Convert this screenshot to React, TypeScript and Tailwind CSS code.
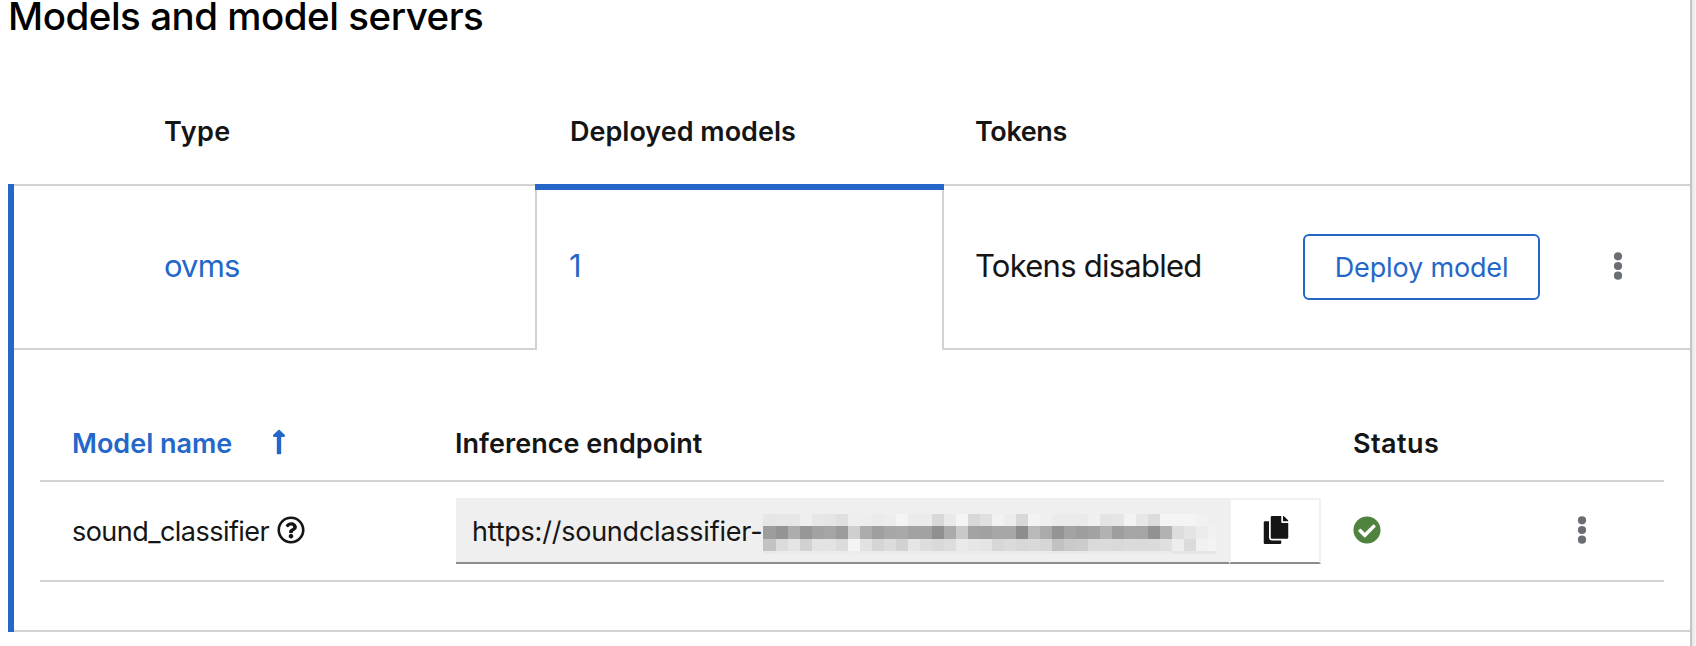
import {
  FaCheckCircle,
  FaCopy,
  FaLongArrowAltUp,
  FaRegQuestionCircle,
} from "react-icons/fa";

// Tones of the redacted part of the endpoint, one list per band of cells.
const REDACTED_ROWS: string[] = [
  "e6 e7 e7 ef e7 e5 e0 ee ed eb ed f4 eb eb d8 e9 f4 d8 e0 f1 ec d8 f3 ef eb eb ea f0 e4 e5 f3 e7 dc f4 f4 f4 f1 ef",
  "9d 94 ad 97 a2 a5 9b cf ac 9f a7 a9 a2 a2 90 ab c9 a3 a1 a7 a7 8d b9 aa 94 a3 9e a2 b2 9e a6 a5 92 b2 dd e4 ec f1",
  "c3 db e4 d1 e3 e3 dc f4 e2 d5 dc d2 e5 dd d9 dd ea e6 e4 d7 db d7 d9 d6 c1 ca cc da db d9 db da db df ed db f1 f4",
  "e9 ec ec ec eb ec ec ed ec eb ec ec ec ec eb eb ec ec ec eb eb eb eb eb e9 e9 e9 eb eb eb eb eb eb eb e6 e5 e6 e6",
];

function Redacted() {
  return (
    <div className="mt-4 flex h-10 w-[453px] flex-col overflow-hidden" aria-hidden>
      {REDACTED_ROWS.map((row, r) => (
        <div key={r} className={r === 3 ? "flex h-[3px]" : "flex h-[12.3px]"}>
          {row.split(" ").map((tone, i) => (
            <span
              key={i}
              className={i === 0 ? "w-[13px] shrink-0" : "w-3 shrink-0"}
              style={{ backgroundColor: `#${tone}${tone}${tone}` }}
            />
          ))}
        </div>
      ))}
    </div>
  );
}

function Kebab() {
  return (
    <button type="button" className="block">
      <svg width="10" height="28" viewBox="0 0 10 28" fill="#6a6e73">
        <circle cx="5" cy="4.3" r="4.1" />
        <circle cx="5" cy="14" r="4.1" />
        <circle cx="5" cy="23.7" r="4.1" />
      </svg>
    </button>
  );
}

export default function App() {
  return (
    <div className="flex h-[646px] w-[1696px] overflow-hidden bg-white font-['Inter',sans-serif] text-[27px] leading-8 whitespace-nowrap text-[#151515]">
      <main className="w-[1690px] shrink-0 pl-2">
        <h1 className="text-[38.5px] leading-8 font-medium tracking-[-0.48px] text-black">
          Models and model servers
        </h1>

        <div className="mt-[46px] flex h-[106px] items-center pt-0.5 font-semibold">
          <div className="w-[562px] pl-[156px] tracking-[0.5px]">Type</div>
          <div className="w-[405px]">Deployed models</div>
          <div className="tracking-[-0.38px]">Tokens</div>
        </div>

        <section className="h-[448px] border-l-[6px] border-[#2467c8]">
          <div className="flex h-[166px]">
            <div className="flex w-[521px] items-center border-y-2 border-[#d2d2d2] pb-[3px] pl-[150px] text-[31px] tracking-[-0.87px] text-[#2467c8]">
              ovms
            </div>
            <div className="flex w-[409px] flex-col">
              <div className="h-1.5 bg-[#2467c8]" />
              <div className="flex flex-1 items-center border-x-2 border-[#d2d2d2] pb-[9px] pl-8 text-[31px] text-[#2467c8]">
                1
              </div>
            </div>
            <div className="flex flex-1 items-center border-y-2 border-[#d2d2d2] pl-[31px]">
              <div className="w-[328px] pb-[3px] text-[31px] tracking-[-0.75px]">
                Tokens disabled
              </div>
              <button
                type="button"
                className="h-[66px] w-[237px] rounded-md border-2 border-[#2467c8] pt-0.5 text-center tracking-[-0.15px] text-[#2467c8]"
              >
                Deploy model
              </button>
              <div className="ml-[73px] pb-0.5">
                <Kebab />
              </div>
            </div>
          </div>

          <div className="flex h-[282px] flex-col border-b-2 border-[#d2d2d2] px-[26px] pt-14">
            <div className="flex h-[76px] items-center border-b-2 border-[#d2d2d2] pt-0.5 font-semibold">
              <div className="flex w-[415px] items-center pl-8 text-[#2467c8]">
                <span className="w-[193px]">Model name</span>
                <FaLongArrowAltUp size={28} className="-mt-1" />
              </div>
              <div className="w-[898px] tracking-[0.04px]">Inference endpoint</div>
              <div className="tracking-[0.44px]">Status</div>
            </div>
            <div className="flex h-[100px] items-center border-b-2 border-[#d2d2d2]">
              <div className="flex w-[416px] items-center pl-8">
                <span className="w-[205px] pt-0.5 tracking-[-0.54px]">sound_classifier</span>
                <FaRegQuestionCircle size={28} className="-mt-0.5" />
              </div>
              <div className="flex h-[66px] w-[865px]">
                <div className="flex w-[773px] border-b-2 border-[#8a8d90] bg-[#efefef] pl-4">
                  <span className="w-[291px] pt-px leading-[66px] tracking-[-0.23px]">
                    https://soundclassifier-
                  </span>
                  <Redacted />
                </div>
                <button
                  type="button"
                  className="flex w-[92px] items-center justify-center border-2 border-[#f0f0f0] border-b-[#8a8d90]"
                >
                  <FaCopy size={28} className="-mt-0.5 ml-px" />
                </button>
              </div>
              <FaCheckCircle size={28} className="-mt-[3px] ml-8 text-[#50833e]" />
              <div className="ml-[196px] pb-[3px]">
                <Kebab />
              </div>
            </div>
          </div>
        </section>
      </main>
      <div className="w-0.5 bg-[#c4c4c4]" />
      <div className="w-1 bg-linear-to-r from-[#e6e6e6] to-[#f4f4f4]" />
    </div>
  );
}
